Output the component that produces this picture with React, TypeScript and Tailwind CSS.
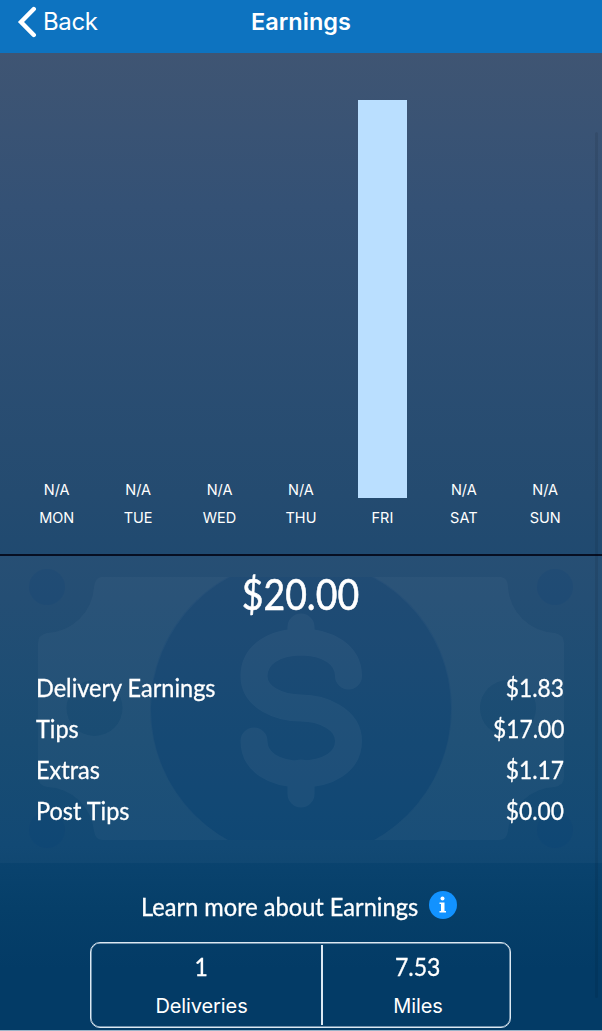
// ─── Data ─────────────────────────────────────────────────────────────────────

type Day = { label: string; amount: number | null };

const days: Day[] = [
  { label: "MON", amount: null },
  { label: "TUE", amount: null },
  { label: "WED", amount: null },
  { label: "THU", amount: null },
  { label: "FRI", amount: 20 },
  { label: "SAT", amount: null },
  { label: "SUN", amount: null },
];

const breakdown = [
  { label: "Delivery Earnings", value: "$1.83" },
  { label: "Tips", value: "$17.00" },
  { label: "Extras", value: "$1.17" },
  { label: "Post Tips", value: "$0.00" },
];

const CHART_HEIGHT = 398;
const maxAmount = Math.max(...days.map((d) => d.amount ?? 0));

// ─── Nav Bar ──────────────────────────────────────────────────────────────────

const NavBar = () => (
  <header className="grid grid-cols-3 h-[53px] shrink-0 bg-[#0d73c0] pb-[9px] items-center">
    <button className="flex items-center pl-[17px] gap-[6px] text-left text-2xl">
      <svg className="w-5 h-8" viewBox="0 0 20 32" fill="none" stroke="currentColor" strokeWidth={4.4}>
        <path strokeLinecap="round" strokeLinejoin="miter" d="M16.800 3L4 16l12.800 13" />
      </svg>
      <span className="leading-8 tracking-[-0.4px]">Back</span>
    </button>
    <h1 className="text-center text-[23.500px] leading-8 font-semibold">Earnings</h1>
  </header>
);

// ─── Week Chart ───────────────────────────────────────────────────────────────

const WeekChart = () => (
  <section className="flex h-[501px] shrink-0 px-4 pt-[47px]">
    {days.map((day) => (
      <div key={day.label} className="flex-1 flex flex-col items-center text-[14.500px]">
        <div className="flex h-[398px] items-end">
          {day.amount === null ? (
            <span className="leading-4">N/A</span>
          ) : (
            <div
              className="w-[49px] bg-[#badfff]"
              style={{ height: (day.amount / maxAmount) * CHART_HEIGHT }}
            />
          )}
        </div>
        <span className="mt-3 leading-4">{day.label}</span>
      </div>
    ))}
  </section>
);

// ─── Bill Watermark ───────────────────────────────────────────────────────────
// Faint bank note behind the totals

const BillWatermark = () => (
  <svg className="absolute inset-0 w-full h-full" viewBox="0 0 602 307" fill="none" aria-hidden="true">
    <defs>
      <mask id="bill">
        <rect width="602" height="307" fill="white" />
        <circle cx="301" cy="153" r="150" fill="black" />
        <circle cx="94.500" cy="152" r="28" fill="black" />
        <circle cx="508" cy="152" r="28" fill="black" />
      </mask>
    </defs>
    <path
      mask="url(#bill)"
      fill="#ffffff"
      fillOpacity="0.03"
      d="M101 21H501Q508 22 508 31A49 49 0 0 0 555 77Q564 79 564 87V221Q564 229 555 231A49 49 0 0 0 508 275Q507 284 499 284H103Q95 284 94 275A49 49 0 0 0 47 231Q38 229 38 221V87Q38 79 47 77A49 49 0 0 0 94 31Q95 22 101 21Z"
    />
    <g fill="#003b78" fillOpacity="0.12">
      <path d="M228 21H374A150 150 0 0 1 374 284H228A150 150 0 0 1 228 21Z" />
      <circle cx="47" cy="31" r="18" />
      <circle cx="555" cy="31" r="18" />
      <circle cx="47" cy="274" r="18" />
      <circle cx="555" cy="274" r="18" />
    </g>
    <g stroke="#ffffff" strokeWidth="27" strokeLinecap="round" opacity="0.04">
      <path d="M301 71V86M301 217V238" />
      <path d="M348.500 120C348.500 99 328 86 301 86S254 99 254 120C254 142 280 152 301 152S348.500 163 348.500 185C348.500 206 328 218 301 218S254 206 254 185" />
    </g>
  </svg>
);

// ─── Totals ───────────────────────────────────────────────────────────────────

const Totals = () => (
  <section className="relative h-[309px] shrink-0 border-t-2 border-[#070f22] bg-white/3 font-[Lato,sans-serif]">
    <BillWatermark />
    <div className="relative pt-[12px]">
      <p className="text-center text-[43px] leading-[52px] [-webkit-text-stroke:0.6px_white]">
        <span className="inline-block -ml-[2px] scale-x-[0.87]">$20.00</span>
      </p>
      <dl className="mt-[47px] pl-9 pr-[38px]">
        {breakdown.map((row) => (
          <div key={row.label} className="flex h-[41px] items-center justify-between text-[25px] [-webkit-text-stroke:0.3px_white]">
            <dt className="origin-left scale-x-[0.94]">{row.label}</dt>
            <dd className="origin-right scale-x-[0.91]">{row.value}</dd>
          </div>
        ))}
      </dl>
    </div>
  </section>
);

// ─── Footer Stats ─────────────────────────────────────────────────────────────

const Stat = ({ value, label }: { value: string; label: string }) => (
  <div className="flex flex-col items-center pt-[7px]">
    <span className="font-[Lato,sans-serif] text-[25px] leading-8 scale-x-[0.92] [-webkit-text-stroke:0.3px_white]">{value}</span>
    <span className="mt-[12px] text-xl leading-6 tracking-[-0.1px]">{label}</span>
  </div>
);

const Summary = () => (
  <section className="flex flex-col h-[168px] shrink-0 border-b border-[#9bb3c7] pt-[24px]">
    <div className="flex items-center pl-[141px] h-9">
      <span className="w-[288px] font-[Lato,sans-serif] text-[25px] whitespace-nowrap pt-1 [-webkit-text-stroke:0.3px_white]">
        <span className="inline-block origin-left scale-x-[0.945]">Learn more about Earnings</span>
      </span>
      <span className="flex w-7 h-7 items-center justify-center rounded-full bg-[#1292ff]">
        <svg className="w-7 h-7" viewBox="0 0 28 28" fill="currentColor">
          <circle cx="13.500" cy="7.500" r="2" />
          <path d="M10.500 11.500H15.500V20H17V21.500H10.500V20H12V13H10.500Z" />
        </svg>
      </span>
    </div>
    <div className="mt-[19px] ml-[90px] w-[421px] h-[86px] grid grid-cols-[221px_9px_2px_1fr] rounded-[10px] border-[1.500px] border-[#dce8f2] ring-[0.5px] ring-inset ring-[#dce8f2]">
      <Stat value="1" label="Deliveries" />
      <div />
      <div className="my-[2px] bg-[#dce8f2]" />
      <div className="pl-[3px]">
        <Stat value="7.53" label="Miles" />
      </div>
    </div>
  </section>
);

// ─── Earnings Page ────────────────────────────────────────────────────────────

export default function App() {
  return (
    <div className="relative flex flex-col w-[602px] h-[1031px] overflow-hidden bg-[linear-gradient(180deg,#3f5573_5%,#345175_20%,#244b70_48%,#1d4970_58%,#12476f_72%,#0b4470_82%,#063f69_88%,#033b66_94%)] font-[Inter,sans-serif] text-white">
      <NavBar />
      <WeekChart />
      <Totals />
      <Summary />
      {/* Scroll indicator */}
      <div className="absolute right-1 top-[132px] w-[3px] h-[866px] rounded-full bg-black/8" />
    </div>
  );
}
